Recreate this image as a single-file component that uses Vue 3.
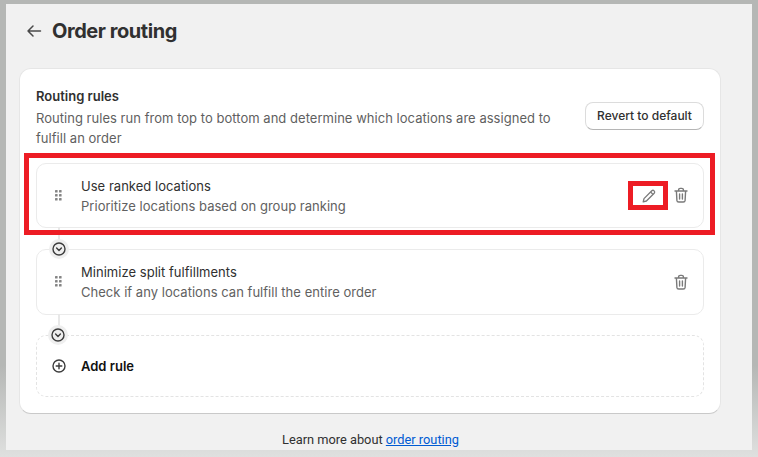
<script setup>
const rules = [
  { id: 1, title: 'Use ranked locations', text: 'Prioritize locations based on group ranking', edit: true },
  { id: 2, title: 'Minimize split fulfillments', text: 'Check if any locations can fulfill the entire order', edit: false },
]
const dots = [[1, 1], [5, 1], [1, 5], [5, 5], [1, 9], [5, 9]]
</script>

<template>
  <div class="frame">
    <main class="panel">
      <header class="head">
        <svg class="back" width="16" height="14" viewBox="0 0 16 14" fill="none" stroke="#4a4a4a" stroke-width="1.5" stroke-linecap="round" stroke-linejoin="round">
          <path d="M14.5 7H2M7 2 2 7l5 5" />
        </svg>
        <h1>Order routing</h1>
      </header>

      <section class="card">
        <div class="intro">
          <div class="intro-text">
            <h2>Routing rules</h2>
            <p>Routing rules run from top to bottom and determine which locations are assigned to fulfill an order</p>
          </div>
          <button class="revert" type="button">Revert to default</button>
        </div>

        <div class="rules">
          <article v-for="rule in rules" :key="rule.id" class="rule" :class="{ marked: rule.edit }">
            <svg class="grip" width="8" height="12" viewBox="0 0 8 12" fill="#858585">
              <rect v-for="(d, i) in dots" :key="i" :x="d[0] - 1" :y="d[1] - 1" width="2.6" height="2.6" rx="0.6" />
            </svg>
            <div class="rule-text">
              <div class="rule-title">{{ rule.title }}</div>
              <div class="rule-sub">{{ rule.text }}</div>
            </div>
            <div class="actions">
              <span v-if="rule.edit" class="pencil-wrap">
                <svg width="16" height="16" viewBox="0 0 16 16" fill="none" stroke="#7a7a7a" stroke-width="1.3" stroke-linejoin="round">
                  <path d="M2.2 13.8 3 10.6 10.8 2.8a1.7 1.7 0 0 1 2.4 2.4L5.4 13z" />
                  <path d="M9.6 4 12 6.4" />
                </svg>
              </span>
              <svg class="trash" width="16" height="17" viewBox="0 0 16 17" fill="none" stroke="#7a7a7a" stroke-width="1.4" stroke-linecap="round" stroke-linejoin="round">
                <path d="M2 4h12M5.6 4V3a1.6 1.6 0 0 1 1.6-1.6h1.6A1.6 1.6 0 0 1 10.4 3v1M3.4 4l.5 9.4A1.8 1.8 0 0 0 5.7 15h4.6a1.8 1.8 0 0 0 1.8-1.6L12.6 4M6.6 7v5M9.4 7v5" />
              </svg>
            </div>
            <span class="link-line"></span>
            <span class="chevron">
              <svg width="14" height="14" viewBox="0 0 14 14" fill="none" stroke="#3c3c3c" stroke-width="1.4" stroke-linecap="round" stroke-linejoin="round">
                <circle cx="7" cy="7" r="6" />
                <path d="M4.6 6 7 8.4 9.4 6" />
              </svg>
            </span>
          </article>

          <div class="add">
            <svg width="14" height="14" viewBox="0 0 14 14" fill="none" stroke="#3c3c3c" stroke-width="1.4" stroke-linecap="round">
              <circle cx="7" cy="7" r="6" />
              <path d="M7 4.2v5.6M4.2 7h5.6" />
            </svg>
            <span>Add rule</span>
          </div>
        </div>
      </section>

      <footer class="foot">Learn more about <a href="#">order routing</a></footer>
    </main>
  </div>
</template>

<style>
html, body { margin: 0; background: #b7b9b7; }
</style>

<style scoped>
.frame {
  box-sizing: border-box;
  width: 758px;
  height: 457px;
  padding: 4px 6px 7px;
  background: linear-gradient(#b5b7b5 0, #b5b7b5 80%, #dfe0df 100%);
  font-family: Inter, "Liberation Sans", sans-serif;
  overflow: hidden;
}
.panel {
  box-sizing: border-box;
  height: 446px;
  padding: 0 31px 0 13px;
  background: #f1f1f1;
  overflow: hidden;
}
.head {
  display: flex;
  align-items: center;
  height: 54px;
  padding-left: 7px;
  gap: 10px;
}
.back { flex: none; }
h1 {
  margin: 0;
  font-size: 20px;
  line-height: 24px;
  font-weight: 650;
  color: #303030;
  letter-spacing: -0.45px;
}
.card {
  box-sizing: border-box;
  width: 702px;
  height: 346px;
  margin-top: 10px;
  padding: 17px 16px 0;
  background: #fff;
  border: 1px solid #e6e6e6;
  border-bottom-color: #c9c9c9;
  border-radius: 12px;
}
.intro {
  display: flex;
  align-items: flex-start;
  justify-content: space-between;
  gap: 20px;
  height: 77px;
}
.intro-text { width: 530px; }
h2 {
  margin: 0 0 2px;
  font-size: 13px;
  line-height: 20px;
  font-weight: 600;
  color: #303030;
}
p {
  margin: 0;
  font-size: 13px;
  line-height: 20px;
  letter-spacing: 0.03px;
  color: #5f5f5f;
}
.revert {
  flex: none;
  width: 119px;
  height: 28px;
  margin-top: 16px;
  padding: 0;
  background: #fff;
  border: 1px solid #dcdcdc;
  border-bottom-color: #b5b5b5;
  border-radius: 8px;
  font: 550 12px/16px Inter, "Liberation Sans", sans-serif;
  color: #303030;
}
.rules {
  display: flex;
  flex-direction: column;
  gap: 21px;
}
.rule {
  position: relative;
  box-sizing: border-box;
  display: flex;
  align-items: center;
  height: 66px;
  padding: 0 14px 0 18px;
  border: 1px solid #ebebeb;
  border-radius: 10px;
}
.rule.marked { height: 65px; }
.rule.marked::before {
  content: "";
  position: absolute;
  z-index: 2;
  inset: -11px -12px -8px -13px;
  border: 5px solid #ed1c24;
  pointer-events: none;
}
.grip { flex: none; }
.rule-text {
  flex: 1;
  margin-left: 18px;
  font-size: 13px;
  line-height: 20px;
  letter-spacing: 0.03px;
}
.rule-title { color: #303030; }
.rule-sub { color: #616161; }
.actions {
  display: flex;
  align-items: center;
  gap: 16px;
}
.pencil-wrap {
  position: relative;
  display: flex;
}
.pencil-wrap::before {
  content: "";
  position: absolute;
  left: -13px;
  top: -7px;
  width: 30px;
  height: 19px;
  border: 5px solid #ed1c24;
}
.trash { flex: none; }
.link-line {
  position: absolute;
  left: 21px;
  top: 100%;
  width: 2px;
  height: 18px;
  background: #e8e8e8;
}
.chevron {
  position: absolute;
  z-index: 1;
  left: 11px;
  top: calc(100% + 11px);
  display: flex;
  padding: 3px;
  background: #efefef;
  border-radius: 50%;
}
.rule.marked .chevron {
  left: 12px;
  top: calc(100% + 12px);
}
.add {
  box-sizing: border-box;
  display: flex;
  align-items: center;
  gap: 15px;
  height: 62px;
  margin-top: -1px;
  padding-left: 15px;
  border: 1px dashed #e3e3e3;
  border-radius: 10px;
  font-size: 13px;
  font-weight: 600;
  color: #111;
}
.foot {
  margin-top: 17px;
  padding-left: 1px;
  text-align: center;
  font: 400 12.8px/18px Roboto, "Liberation Sans", sans-serif;
  color: #303030;
}
.foot a { color: #005bd3; }
</style>
